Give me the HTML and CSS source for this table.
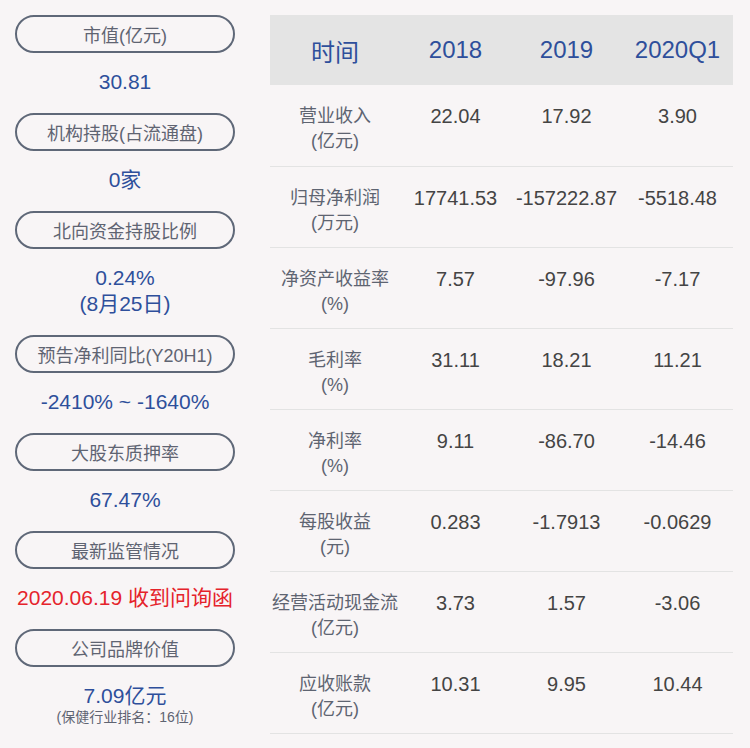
FILE: index.html
```html
<!DOCTYPE html>
<html lang="zh-CN">
<head>
<meta charset="utf-8">
<title>财务概览</title>
<link rel="stylesheet" href="styles.css">
</head>
<body>
<div class="page">
  <div class="side">
    <div class="pill">市值(亿元)</div>
    <div class="val">30.81</div>
    <div class="pill">机构持股(占流通盘)</div>
    <div class="val">0家</div>
    <div class="pill">北向资金持股比例</div>
    <div class="val">0.24%<br>(8月25日)</div>
    <div class="pill">预告净利同比(Y20H1)</div>
    <div class="val">-2410% ~ -1640%</div>
    <div class="pill">大股东质押率</div>
    <div class="val">67.47%</div>
    <div class="pill">最新监管情况</div>
    <div class="val red">2020.06.19 收到问询函</div>
    <div class="pill">公司品牌价值</div>
    <div class="val last">7.09亿元<div class="sub">(保健行业排名：16位)</div></div>
  </div>
  <table class="fin">
    <thead>
      <tr><th class="c1">时间</th><th>2018</th><th>2019</th><th>2020Q1</th></tr>
    </thead>
    <tbody>
      <tr><td class="lbl">营业收入<br>(亿元)</td><td>22.04</td><td>17.92</td><td>3.90</td></tr>
      <tr><td class="lbl">归母净利润<br>(万元)</td><td>17741.53</td><td>-157222.87</td><td>-5518.48</td></tr>
      <tr><td class="lbl">净资产收益率<br>(%)</td><td>7.57</td><td>-97.96</td><td>-7.17</td></tr>
      <tr><td class="lbl">毛利率<br>(%)</td><td>31.11</td><td>18.21</td><td>11.21</td></tr>
      <tr><td class="lbl">净利率<br>(%)</td><td>9.11</td><td>-86.70</td><td>-14.46</td></tr>
      <tr><td class="lbl">每股收益<br>(元)</td><td>0.283</td><td>-1.7913</td><td>-0.0629</td></tr>
      <tr><td class="lbl">经营活动现金流<br>(亿元)</td><td>3.73</td><td>1.57</td><td>-3.06</td></tr>
      <tr><td class="lbl">应收账款<br>(亿元)</td><td>10.31</td><td>9.95</td><td>10.44</td></tr>
    </tbody>
  </table>
</div>
</body>
</html>
```
FILE: styles.css
```css
html, body {
  margin: 0;
  padding: 0;
  background: #f8f5f6;
  font-family: "Liberation Sans", "Noto Sans CJK SC", sans-serif;
}
.page {
  display: flex;
  align-items: flex-start;
  gap: 35px;
  padding: 15px;
}
.side {
  width: 220px;
  flex: none;
  display: flex;
  flex-direction: column;
  text-align: center;
}
.pill {
  box-sizing: border-box;
  height: 38px;
  border: 2px solid #5f6878;
  border-radius: 19px;
  display: flex;
  align-items: center;
  justify-content: center;
  font-size: 18px;
  color: #5f6472;
}
.val {
  padding: 16px 0 18px;
  font-size: 21px;
  line-height: 26px;
  color: #2e4f9b;
}
.val.red {
  color: #e5232b;
  white-space: nowrap;
}
.val.last {
  padding-bottom: 0;
}
.sub {
  font-size: 14px;
  line-height: 16px;
  color: #5f6472;
}
.fin {
  width: 463px;
  border-collapse: collapse;
  table-layout: fixed;
  text-align: center;
}
.fin th {
  width: 111px;
  height: 70px;
  padding: 0;
  background: #e4e4e4;
  font-size: 24px;
  font-weight: normal;
  color: #2e4f9b;
}
.fin th.c1 {
  width: 130px;
}
.fin td {
  box-sizing: border-box;
  height: 81px;
  padding: 19px 0 0;
  vertical-align: top;
  border-bottom: 1px solid #e3e3e3;
  font-size: 20px;
  line-height: 25px;
  color: #444444;
  white-space: nowrap;
}
.fin td.lbl {
  font-size: 18px;
  color: #5e6471;
}
```
